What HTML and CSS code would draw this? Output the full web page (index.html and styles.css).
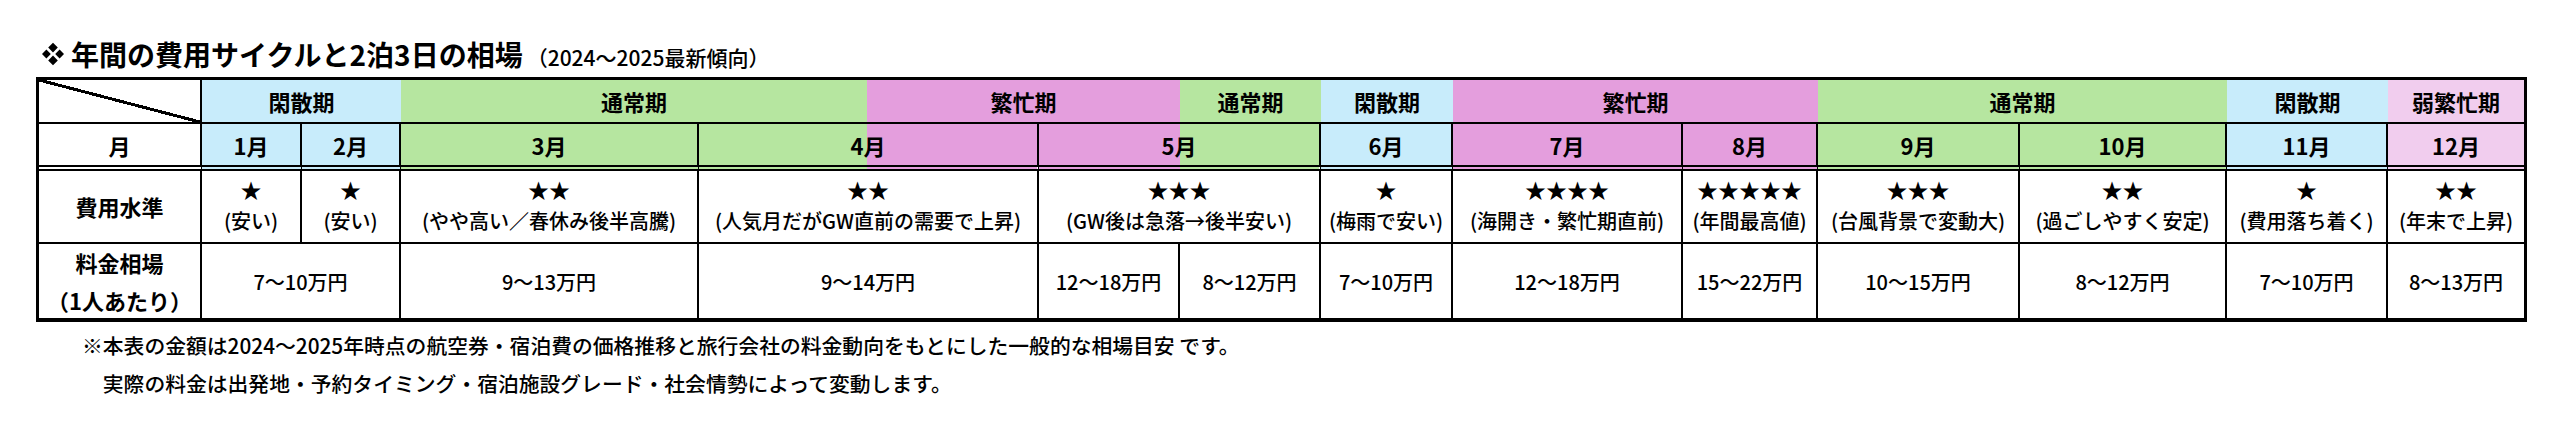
FILE: index.html
```html
<!DOCTYPE html>
<html lang="ja">
<head>
<meta charset="utf-8">
<title>年間の費用サイクルと2泊3日の相場</title>
<link rel="stylesheet" href="styles.css">
</head>
<body>
<div class="page">
  <h1 class="title"><svg class="mark" viewBox="0 0 24 24" width="24" height="24" aria-hidden="true"><path d="M12 0.8 16.8 5.6 12 10.4 7.2 5.6Z M12 13.6 16.8 18.4 12 23.2 7.2 18.4Z M5.4 7.6 9.8 12 5.4 16.4 1 12Z M18.6 7.6 23 12 18.6 16.4 14.2 12Z" fill="#000"/></svg><span class="main">年間の費用サイクルと2泊3日の相場</span><span class="sub">（2024〜2025最新傾向）</span></h1>

  <div class="grid">
    <!-- period band row -->
    <div class="c diag"></div>
    <div class="c band off s2">閑散期</div>
    <div class="c band mid s2">通常期</div>
    <div class="c band peak s2">繁忙期</div>
    <div class="c band mid">通常期</div>
    <div class="c band off">閑散期</div>
    <div class="c band peak s2">繁忙期</div>
    <div class="c band mid s2">通常期</div>
    <div class="c band off">閑散期</div>
    <div class="c band weak last">弱繁忙期</div>

    <!-- month row -->
    <div class="c month lab">月</div>
    <div class="c month off">1月</div>
    <div class="c month off">2月</div>
    <div class="c month mid">3月</div>
    <div class="c month apr s2">4月</div>
    <div class="c month may s2">5月</div>
    <div class="c month off">6月</div>
    <div class="c month peak">7月</div>
    <div class="c month peak">8月</div>
    <div class="c month mid">9月</div>
    <div class="c month mid">10月</div>
    <div class="c month off">11月</div>
    <div class="c month weak last">12月</div>

    <!-- cost level row -->
    <div class="c lab cost-lab">費用水準</div>
    <div class="c cost"><span class="stars">★</span><span class="note">(安い)</span></div>
    <div class="c cost"><span class="stars">★</span><span class="note">(安い)</span></div>
    <div class="c cost"><span class="stars">★★</span><span class="note">(やや高い／春休み後半高騰)</span></div>
    <div class="c cost s2"><span class="stars">★★</span><span class="note">(人気月だがGW直前の需要で上昇)</span></div>
    <div class="c cost s2"><span class="stars">★★★</span><span class="note">(GW後は急落→後半安い)</span></div>
    <div class="c cost"><span class="stars">★</span><span class="note">(梅雨で安い)</span></div>
    <div class="c cost"><span class="stars">★★★★</span><span class="note">(海開き・繁忙期直前)</span></div>
    <div class="c cost"><span class="stars">★★★★★</span><span class="note">(年間最高値)</span></div>
    <div class="c cost"><span class="stars">★★★</span><span class="note">(台風背景で変動大)</span></div>
    <div class="c cost"><span class="stars">★★</span><span class="note">(過ごしやすく安定)</span></div>
    <div class="c cost"><span class="stars">★</span><span class="note">(費用落ち着く)</span></div>
    <div class="c cost last"><span class="stars">★★</span><span class="note">(年末で上昇)</span></div>

    <!-- price row -->
    <div class="c lab price-lab bottom"><span>料金相場</span><span>（1人あたり）</span></div>
    <div class="c price bottom s2">7〜10万円</div>
    <div class="c price bottom">9〜13万円</div>
    <div class="c price bottom s2">9〜14万円</div>
    <div class="c price bottom">12〜18万円</div>
    <div class="c price bottom">8〜12万円</div>
    <div class="c price bottom">7〜10万円</div>
    <div class="c price bottom">12〜18万円</div>
    <div class="c price bottom">15〜22万円</div>
    <div class="c price bottom">10〜15万円</div>
    <div class="c price bottom">8〜12万円</div>
    <div class="c price bottom">7〜10万円</div>
    <div class="c price bottom last">8〜13万円</div>
  </div>

  <div class="notes">
    <p>※本表の金額は2024〜2025年時点の航空券・宿泊費の価格推移と旅行会社の料金動向をもとにした一般的な相場目安 です。</p>
    <p>　実際の料金は出発地・予約タイミング・宿泊施設グレード・社会情勢によって変動します。</p>
  </div>
</div>
</body>
</html>
```

FILE: styles.css
```css
* {
  box-sizing: border-box;
}

html,
body {
  margin: 0;
  padding: 0;
  background: #ffffff;
}

body {
  font-family: "Noto Sans CJK JP", "Noto Sans", sans-serif;
  color: #000000;
}

.page {
  width: 2560px;
  padding: 39px 0 0 36px;
}

/* ---------- title ---------- */
.title {
  display: flex;
  align-items: baseline;
  height: 30px;
  margin: 0 0 8px 5px;
  line-height: 30px;
  font-weight: 700;
}

.mark {
  flex: none;
  align-self: center;
  margin-right: 6px;
}

.main {
  font-size: 28px;
  font-weight: 700;
}

.sub {
  margin-left: 4px;
  font-size: 21px;
  font-weight: 500;
}

/* ---------- table grid ---------- */
.grid {
  display: grid;
  width: 2491px;
  grid-template-columns: 163px 100px 99px 298px 168px 172px 141px 141px 132px 230px 135px 202px 207px 161px 136px;
  grid-template-rows: 44px 47px 73px 74px;
  border: 3px solid #000;
  border-bottom-width: 4px;
}

.c {
  display: flex;
  flex-direction: column;
  align-items: center;
  justify-content: center;
  text-align: center;
  white-space: nowrap;
  border-right: 2px solid #000;
  border-bottom: 2px solid #000;
}

.s2 {
  grid-column: span 2;
}

.last {
  border-right: none;
}

.bottom {
  border-bottom: none;
}

/* diagonal corner */
.diag {
  background: linear-gradient(to top right,
      transparent calc(50% - 1.5px),
      #000 calc(50% - 1.5px),
      #000 calc(50% + 1.5px),
      transparent calc(50% + 1.5px));
}

/* period colours */
.off {
  background-color: #c8ecfb;
}

.mid {
  background-color: #b6e6a0;
}

.peak {
  background-color: #e49edd;
}

.weak {
  background-color: #f1cdee;
}

.apr {
  background: linear-gradient(to right, #b6e6a0 168px, #e49edd 168px);
}

.may {
  background: linear-gradient(to right, #e49edd 141px, #b6e6a0 141px);
}

/* band row */
.band {
  border-right: none;
  font-size: 22px;
  font-weight: 700;
}

/* month row */
.month {
  font-size: 22px;
  font-weight: 700;
  border-bottom: 6px double #000;
}

.lab {
  font-size: 22px;
  font-weight: 700;
}

/* cost row */
.cost {
  font-size: 20px;
  font-weight: 500;
  line-height: 32px;
  padding-bottom: 3px;
}

.stars {
  font-size: 21px;
}

.cost-lab {
  padding-bottom: 2px;
}

/* price row */
.price {
  font-size: 20px;
  font-weight: 500;
}

.price-lab {
  line-height: 38px;
}

/* ---------- notes ---------- */
.notes {
  margin-top: 4px;
  padding-left: 46px;
  font-size: 20.8px;
  font-weight: 500;
  line-height: 38px;
}

.notes p {
  margin: 0;
  white-space: nowrap;
}
```
